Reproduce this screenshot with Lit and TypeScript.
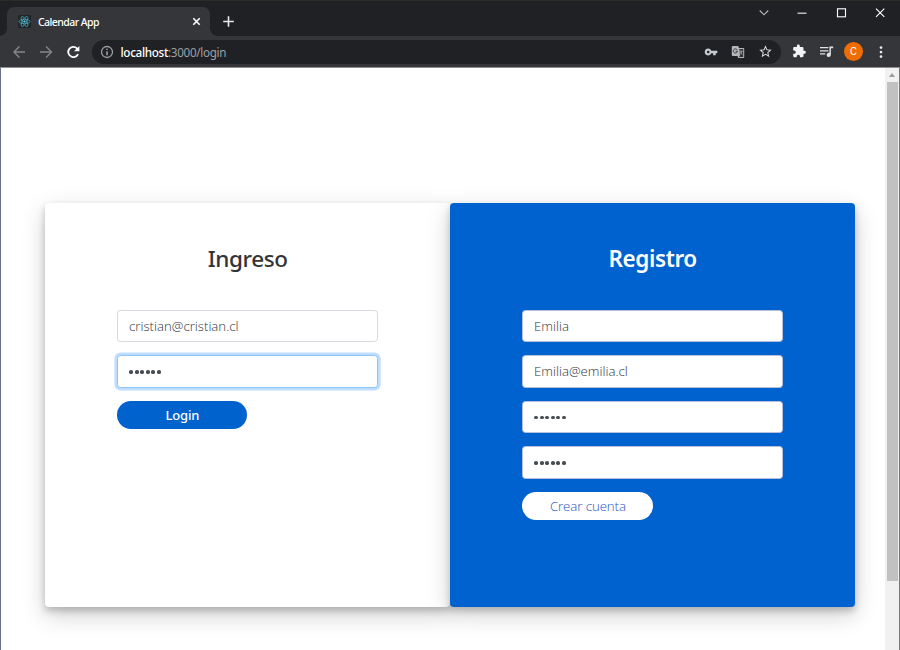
import { LitElement, html, svg, css } from "lit";
import { customElement, property } from "lit/decorators.js";
import { classMap } from "lit/directives/class-map.js";

@customElement("browser-bar")
class BrowserBar extends LitElement {
  static styles = css`
    :host { display: block; height: 68px; background: #35363a; font-family: "Noto Sans", "Open Sans", sans-serif; }
    svg { display: block; flex: none; }
    .strip { height: 36px; background: #202124; display: flex; padding-left: 7px; box-sizing: border-box; border-top: 1px solid #2a2b28; }
    .tab { position: relative; width: 203px; height: 29px; margin-top: 6px; box-sizing: border-box; background: #35363a; border-radius: 7px 7px 0 0; display: flex; align-items: center; padding: 0 9px 0 11px; color: #fff; }
    .tab::before, .tab::after { content: ""; position: absolute; bottom: 0; width: 7px; height: 7px; }
    .tab::before { left: -7px; background: radial-gradient(circle at 0 0, transparent 6.5px, #35363a 7px); }
    .tab::after { right: -7px; background: radial-gradient(circle at 100% 0, transparent 6.5px, #35363a 7px); }
    .name { margin-left: 7px; flex: 1; font: 500 10.5px/14px "Noto Sans", sans-serif; letter-spacing: -0.57px; white-space: nowrap; }
    .plus { margin: 14px 0 0 12px; }
    .window { margin-left: auto; display: flex; margin-top: 4px; margin-right: 13.5px; gap: 24.6px; }
    .tools { height: 31px; display: flex; align-items: center; padding: 0 12px 0 12px; box-sizing: border-box; }
    .tools > svg { margin-right: 13px; }
    .url { width: 689px; height: 24px; border-radius: 12px; background: #202124; display: flex; align-items: center; box-sizing: border-box; padding: 0 8px; margin-left: -1px; margin-right: 11px; }
    .address { margin-left: 6.5px; flex: 1; font-size: 11.7px; line-height: 16px; letter-spacing: -0.33px; color: #9aa0a6; white-space: nowrap; }
    .address b { color: #fff; font-weight: 500; }
    .url svg { margin-left: 13px; }
    .url svg:first-child { margin-left: 0; }
    .tools > svg.piece { margin-right: 12px; }
    .tools > svg.music { margin-right: 10.5px; }
    .avatar { width: 19px; height: 19px; border-radius: 50%; background: #ef6c00; color: #fff; font: 10.5px/19px Roboto, sans-serif; text-align: center; margin-right: 11px; flex: none; }
    .tools > svg.dots { margin: 0; }
    .line { height: 1px; background: #8d8d8f; }
  `;

  icon(d: string, fill: string, size = 16, cls = "") {
    return html`<svg class=${cls} width=${size} height=${size} viewBox="0 0 24 24"><path d=${d} fill=${fill} /></svg>`;
  }

  render() {
    const orbit = (a: number) => svg`<ellipse cx="6.5" cy="6.5" rx="5.6" ry="2.1" transform="rotate(${a} 6.5 6.5)" fill="none" stroke="#4fa9bd" stroke-width=".8" />`;
    return html`
      <div class="strip">
        <div class="tab">
          <svg width="13" height="13"><rect width="13" height="13" rx="1.5" fill="#202528" />${[0, 60, 120].map(orbit)}<circle cx="6.5" cy="6.5" r="1.1" fill="#61dafb" /></svg>
          <span class="name">Calendar App</span>
          <svg width="9" height="9"><path d="M1.3 1.3l6.4 6.4m0-6.4l-6.4 6.4" stroke="#fff" stroke-width="1.6" /></svg>
        </div>
        <svg class="plus" width="13" height="13"><path d="M6.5 1.2v10.6M1.2 6.5h10.6" stroke="#e8eaed" stroke-width="1.6" /></svg>
        <div class="window">
          <svg width="14" height="14"><path d="M2.7 5.5L7 9.8l4.3-4.3" fill="none" stroke="#b8b8b8" stroke-width="1.1" /></svg>
          <svg width="14" height="14"><path d="M2.5 8.2h9" stroke="#e2e2dc" stroke-width="1.2" /></svg>
          <svg width="14" height="14"><rect x="3.5" y="3.8" width="8" height="8" fill="none" stroke="#fff" stroke-width="1.1" /></svg>
          <svg width="14" height="14"><path d="M3 3.6l8.3 8.3m0-8.3L3 11.9" stroke="#fff" stroke-width="1.1" /></svg>
        </div>
      </div>
      <div class="tools">
        <svg width="14" height="14"><path d="M13 7H2m5.4-5.4L2 7l5.4 5.4" fill="none" stroke="#85868a" stroke-width="1.4" /></svg>
        <svg width="14" height="14"><path d="M1 7h11.5M7.1 1.6L12.5 7l-5.4 5.4" fill="none" stroke="#85868a" stroke-width="1.4" /></svg>
        <svg width="14" height="14"><path d="M12 9.1A5.1 5.1 0 1 1 10.9 3.3l1 1" fill="none" stroke="#fff" stroke-width="1.8" /><path d="M13.4 .9v5.4H8z" fill="#fff" /></svg>
        <div class="url">
          <svg width="14" height="14"><circle cx="7" cy="7" r="5.5" fill="none" stroke="#9aa0a6" stroke-width="1.3" /><path d="M7 6.2v4M7 3.7v1.4" stroke="#b5b9bd" stroke-width="1.3" /></svg>
          <span class="address"><b>localhost</b>:3000/login</span>
          <svg width="14" height="14"><path fill-rule="evenodd" d="M4.2 3.6a3.4 3.4 0 1 0 3.1 4.7h1.8v1.9h2.6V8.3h1.6V5.7H7.3a3.4 3.4 0 0 0-3.1-2.1zm0 2.1a1.3 1.3 0 1 1 0 2.6 1.3 1.3 0 0 1 0-2.6z" fill="#c8cbd0" /></svg>
          <svg width="14" height="14"><path d="M1.8 1h5.4l.8 2h4.2q1 0 1 1v8q0 1-1 1H7.2l-.7-2H1.8q-1 0-1-1V2q0-1 1-1z" fill="#b4b7bb" /><path d="M8.3 4h3.9v8.1H8l1-1.8z" fill="#303134" /><path d="M6.2 4.8a2.1 2.1 0 1 0 .3 1.4H4.6" fill="none" stroke="#303134" stroke-width=".9" /><path d="M8.2 6.3h3.5M10 5.3v1M11 6.4c-.3 1.5-1 2.4-2 3.1M9 7.2l2.4 2.6" stroke="#b4b7bb" stroke-width=".7" fill="none" /></svg>
          ${this.icon("M22 9.24l-7.19-.62L12 2 9.19 8.63 2 9.24l5.46 4.73L5.82 21 12 17.27 18.18 21l-1.63-7.03L22 9.24zM12 15.4l-3.76 2.27 1-4.28-3.32-2.88 4.38-.38L12 6.1l1.71 4.04 4.38.38-3.32 2.88 1 4.28L12 15.4z", "#dcdee2", 15)}
        </div>
        ${this.icon("M20.5 11H19V7c0-1.1-.9-2-2-2h-4V3.5C13 2.12 11.88 1 10.5 1S8 2.12 8 3.5V5H4c-1.1 0-1.99.9-1.99 2v3.8H3.5c1.49 0 2.7 1.21 2.7 2.7s-1.21 2.7-2.7 2.7H2V20c0 1.1.9 2 2 2h3.8v-1.5c0-1.49 1.21-2.7 2.7-2.7s2.7 1.21 2.7 2.7V22H17c1.1 0 2-.9 2-2v-4h1.5c1.38 0 2.5-1.12 2.5-2.5S21.88 11 20.5 11z", "#f1f3f4", 14.5, "piece")}
        <svg class="music" width="15" height="14"><path d="M1 2.7h8.4M1 5.8h8.4M1 8.9h5.2" stroke="#dfe1e5" stroke-width="1.3" /><path d="M10.4 1.5h3.8v1.8h-2.3v6.5a2.1 2.1 0 1 1-1.5-2z" fill="#dfe1e5" /></svg>
        <div class="avatar">C</div>
        <svg class="dots" width="14" height="14"><g fill="#e8eaed"><circle cx="7" cy="2.6" r="1.35" /><circle cx="7" cy="7.1" r="1.35" /><circle cx="7" cy="11.6" r="1.35" /></g></svg>
      </div>
      <div class="line"></div>
    `;
  }
}

interface Field {
  text: string;
  secret?: boolean;
  focused?: boolean;
}

@customElement("auth-card")
class AuthCard extends LitElement {
  @property() heading = "";
  @property() action = "";
  @property({ type: Boolean }) filled = false;
  @property({ attribute: false }) fields: Field[] = [];

  static styles = css`
    :host { display: block; width: 405px; height: 404px; }
    .card { height: 100%; box-sizing: border-box; padding: 40px 72px 0 72.4px; border-radius: 4px; background: #fff; color: #343434; box-shadow: 0 4px 7px rgba(0, 0, 0, 0.2), 0 8px 23px rgba(0, 0, 0, 0.19); font-family: "Open Sans", "Noto Sans", sans-serif; }
    h3 { margin: 0 0 34.7px; font: 500 22.5px/32px "Noto Sans", "Open Sans", sans-serif; letter-spacing: -0.4px; text-align: center; }
    .field { height: 32.5px; box-sizing: border-box; border: 1px solid #d5d8de; border-radius: 3.5px; background: #fff; color: #2f353b; padding: 0 10.7px; margin-bottom: 13px; font-size: 13.2px; line-height: 31px; font-weight: 350; white-space: nowrap; }
    .focused { border-color: #8fc2fa; box-shadow: 0 0 0 2.6px #bfddff; }
    .dots { display: flex; align-items: center; gap: 1.8px; padding-left: 11px; padding-top: 1px; }
    .dot { width: 3.7px; height: 3.7px; border-radius: 50%; background: #484d54; }
    .button { display: block; width: 130px; height: 28px; border: 0; border-radius: 14px; padding: 1px 0 0; background: #0062cc; color: #fff; font: 500 13px/27px "Noto Sans", "Open Sans", sans-serif; letter-spacing: -0.2px; }
    .filled { background: #0062cf; color: #fff; }
    .filled h3 { font-weight: 600; letter-spacing: -0.4px; }
    .filled .field { border-color: #b6bfdb; }
    .filled .button { width: 131px; background: #fff; color: #1f52c4; font: 350 13.3px/27px "Open Sans", "Noto Sans", sans-serif; letter-spacing: -0.1px; }
  `;

  render() {
    return html`
      <div class=${classMap({ card: true, filled: this.filled })}>
        <h3>${this.heading}</h3>
        ${this.fields.map((f) => html`
          <div class=${classMap({ field: true, focused: !!f.focused, dots: !!f.secret })}>
            ${f.secret ? Array.from(f.text, () => html`<span class="dot"></span>`) : f.text}
          </div>`)}
        <button class="button">${this.action}</button>
      </div>
    `;
  }
}

@customElement("app-root")
class AppRoot extends LitElement {
  static styles = css`
    :host { display: block; width: 900px; height: 650px; overflow: hidden; background: #fff; }
    .view { display: flex; height: 582px; box-sizing: border-box; border-left: 1px solid #687085; border-right: 1px solid #777; }
    .page { flex: 1; display: flex; align-items: flex-start; padding: 135px 0 0 44px; overflow: hidden; }
    .scroll { width: 14px; background: #f1f1f1; display: flex; flex-direction: column; align-items: center; }
    .arrow { border: 3.5px solid transparent; border-top: 0; border-bottom: 4px solid #9b9b9b; margin: 5px 0; }
    .thumb { width: 11px; height: 499px; background: #c1c1c1; }
  `;

  render() {
    return html`
      <browser-bar></browser-bar>
      <div class="view">
        <main class="page">
          <auth-card heading="Ingreso" action="Login" .fields=${[{ text: "cristian@cristian.cl" }, { text: "123456", secret: true, focused: true }]}></auth-card>
          <auth-card filled heading="Registro" action="Crear cuenta" .fields=${[{ text: "Emilia" }, { text: "Emilia@emilia.cl" }, { text: "123456", secret: true }, { text: "123456", secret: true }]}></auth-card>
        </main>
        <div class="scroll"><div class="arrow"></div><div class="thumb"></div></div>
      </div>
    `;
  }
}
